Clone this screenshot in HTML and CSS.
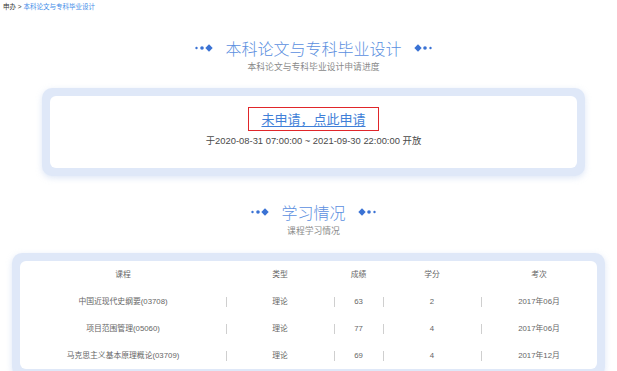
FILE: index.html
```html
<!DOCTYPE html>
<html lang="zh-CN">
<head>
<meta charset="utf-8">
<title>本科论文与专科毕业设计</title>
<link rel="stylesheet" href="styles.css">
</head>
<body>
<div class="crumb"><span class="crumb-root">申办</span> &gt; <span class="crumb-cur">本科论文与专科毕业设计</span></div>

<div class="top">
  <div class="head">
    <div class="title-line">
      <svg class="deco" width="18" height="8" viewBox="0 0 18 8"><circle cx="1.5" cy="4" r="1.2"/><circle cx="7" cy="4" r="1.8"/><path d="M14 0.3 L17.7 4 L14 7.7 L10.3 4 Z"/></svg>
      <span class="title">本科论文与专科毕业设计</span>
      <svg class="deco" width="18" height="8" viewBox="0 0 18 8"><path d="M4 0.3 L7.7 4 L4 7.7 L0.3 4 Z"/><circle cx="11" cy="4" r="1.8"/><circle cx="16.5" cy="4" r="1.2"/></svg>
    </div>
    <div class="subtitle">本科论文与专科毕业设计申请进度</div>
  </div>

  <div class="card apply-card">
    <div class="card-inner apply-inner">
      <a class="apply-link" href="#">未申请，点此申请</a>
      <div class="apply-time">于2020-08-31 07:00:00 ~ 2021-09-30 22:00:00 开放</div>
    </div>
  </div>

  <div class="head head2">
    <div class="title-line">
      <svg class="deco" width="18" height="8" viewBox="0 0 18 8"><circle cx="1.5" cy="4" r="1.2"/><circle cx="7" cy="4" r="1.8"/><path d="M14 0.3 L17.7 4 L14 7.7 L10.3 4 Z"/></svg>
      <span class="title">学习情况</span>
      <svg class="deco" width="18" height="8" viewBox="0 0 18 8"><path d="M4 0.3 L7.7 4 L4 7.7 L0.3 4 Z"/><circle cx="11" cy="4" r="1.8"/><circle cx="16.5" cy="4" r="1.2"/></svg>
    </div>
    <div class="subtitle">课程学习情况</div>
  </div>
</div>

<div class="card table-card">
  <div class="card-inner">
    <div class="grid">
      <div class="th">课程</div><div class="th">类型</div><div class="th">成绩</div><div class="th">学分</div><div class="th">考次</div>

      <div class="td">中国近现代史纲要(03708)</div><div class="td sep">理论</div><div class="td sep">63</div><div class="td sep">2</div><div class="td sep">2017年06月</div>

      <div class="td">项目范围管理(05060)</div><div class="td sep">理论</div><div class="td sep">77</div><div class="td sep">4</div><div class="td sep">2017年06月</div>

      <div class="td">马克思主义基本原理概论(03709)</div><div class="td sep">理论</div><div class="td sep">69</div><div class="td sep">4</div><div class="td sep">2017年12月</div>
    </div>
  </div>
</div>
</body>
</html>
```

FILE: styles.css
```css
html, body {
  margin: 0;
  padding: 0;
  background: #ffffff;
}
body {
  font-family: "Liberation Sans", "Noto Sans CJK SC", sans-serif;
  color: #333;
  overflow: hidden;
}

.crumb {
  height: 16px;
  line-height: 14px;
  padding-left: 3px;
  font-size: 6.5px;
  color: #333;
}
.crumb-cur {
  color: #3d8be8;
}

.top {
  padding-left: 10px;
}

.head {
  margin-top: 20px;
  text-align: center;
}
.head2 {
  margin-top: 24px;
}
.title-line {
  display: flex;
  justify-content: center;
  align-items: center;
  gap: 12px;
  height: 24px;
}
.title {
  font-family: "Noto Sans CJK SC", sans-serif;
  font-weight: 300;
  font-size: 16px;
  color: #5b8fe0;
  line-height: 24px;
}
.deco {
  fill: #3a72d4;
  display: block;
}
.subtitle {
  font-family: "Noto Sans CJK SC", sans-serif;
  font-size: 8.8px;
  line-height: 14px;
  color: #8a8a8a;
}

.card {
  background: #dfe8f8;
  padding: 8px;
  border-radius: 10px;
  box-shadow: 0 2px 6px rgba(160, 185, 230, 0.35);
}
.card-inner {
  background: #ffffff;
  border-radius: 6px;
}

.apply-card {
  margin: 14px 32px 0 32px;
}
.apply-inner {
  height: 72px;
  box-sizing: border-box;
  padding-top: 11px;
  display: flex;
  flex-direction: column;
  align-items: center;
}
.apply-link {
  display: block;
  border: 1.5px solid #e0262a;
  padding: 0 12px;
  height: 24px;
  box-sizing: border-box;
  line-height: 22px;
  font-family: "Noto Sans CJK SC", sans-serif;
  font-size: 13px;
  color: #3f7fd8;
  text-decoration: underline;
  text-underline-offset: 2px;
}
.apply-time {
  margin-top: 4px;
  font-size: 9.4px;
  line-height: 12px;
  color: #4a4a4a;
}

.table-card {
  margin: 15px 12px 0 12px;
}
.grid {
  display: grid;
  grid-template-columns: 206px 108px 49px 98px 1fr;
  font-size: 7.8px;
  color: #666;
}
.th {
  height: 27px;
  line-height: 27px;
  text-align: center;
}
.td {
  height: 27px;
  line-height: 27px;
  text-align: center;
  white-space: nowrap;
}
.sep {
  background: linear-gradient(#cfcfcf, #cfcfcf) left center / 1px 10px no-repeat;
}
```
